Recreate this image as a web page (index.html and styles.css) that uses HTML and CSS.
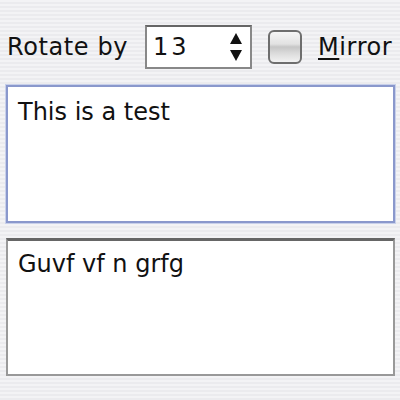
FILE: index.html
```html
<!DOCTYPE html>
<html>
<head>
<meta charset="utf-8">
<link rel="stylesheet" href="styles.css">
</head>
<body>
<div class="panel">
  <div class="toolbar">
    <span class="label">Rotate by</span>
    <div class="spinner">
      <span class="value">13</span>
      <svg class="arrows" width="14" height="30" viewBox="0 0 14 30">
        <path d="M7 1 L13 12 L1 12 Z" fill="#111"/>
        <path d="M7 29 L13 18 L1 18 Z" fill="#111"/>
      </svg>
    </div>
    <span class="check"></span>
    <span class="mirror"><u>M</u>irror</span>
  </div>
  <div class="area area-in">This is a test</div>
  <div class="area area-out">Guvf vf n grfg</div>
</div>
</body>
</html>
```
FILE: styles.css
```css
html, body {
  margin: 0;
  padding: 0;
  width: 400px;
  height: 400px;
  overflow: hidden;
}
body {
  background: repeating-linear-gradient(to bottom, #f3f3f5 0px, #f3f3f5 2px, #ebebee 2px, #ebebee 4px);
  font-family: "DejaVu Sans", sans-serif;
  color: #111;
}
.panel {
  padding: 25px 5px 0 6px;
  display: flex;
  flex-direction: column;
}
.toolbar {
  display: flex;
  align-items: center;
  height: 44px;
}
.label {
  font-size: 24px;
  letter-spacing: 0.6px;
  margin-left: 1px;
  width: 138px;
  white-space: nowrap;
}
.spinner {
  box-sizing: border-box;
  width: 107px;
  height: 44px;
  border: 2px solid #888;
  border-top-color: #666;
  background: #fff;
  display: flex;
  align-items: center;
  justify-content: space-between;
  padding: 0 7px 0 6px;
}
.value {
  font-size: 24px;
  letter-spacing: 3px;
}
.arrows {
  display: block;
}
.check {
  box-sizing: border-box;
  width: 34px;
  height: 34px;
  margin-left: 16px;
  border: 2px solid #6e6e6e;
  border-radius: 6px;
  background: linear-gradient(to bottom, #f6f6f6 0%, #e2e2e2 40%, #c6c6c6 50%, #dadada 70%, #f2f2f2 100%);
}
.mirror {
  font-size: 24px;
  letter-spacing: 0.6px;
  margin-left: 16px;
}
.mirror u {
  text-decoration-thickness: 2px;
  text-underline-offset: 3px;
}
.area {
  box-sizing: border-box;
  width: 389px;
  height: 138px;
  background: #fff;
  font-size: 24px;
  line-height: 28px;
  padding: 9px 10px;
}
.area-in {
  margin-top: 16px;
  padding-top: 11px;
  border: 2px solid #8a98cc;
  box-shadow: 0 0 0 1px #c8d0ea;
}
.area-out {
  margin-top: 15px;
  border: 2px solid #999;
  border-top: 3px solid #666;
}
```
